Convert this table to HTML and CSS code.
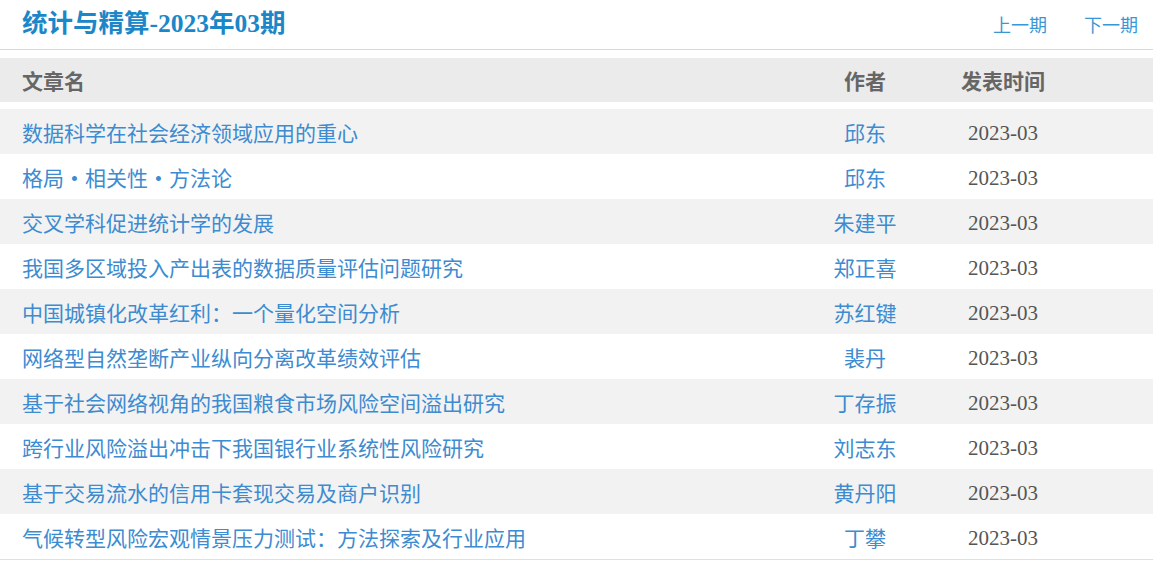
FILE: index.html
```html
<!DOCTYPE html>
<html lang="zh-CN">
<head>
<meta charset="utf-8">
<title>统计与精算-2023年03期</title>
<link rel="stylesheet" href="styles.css">
</head>
<body>
<div class="page">
  <header class="topbar">
    <h1 class="title">统计与精算-2023年03期</h1>
    <nav class="pager">
      <a href="#">上一期</a>
      <a href="#">下一期</a>
    </nav>
  </header>
  <div class="list">
    <div class="row head">
      <div class="c-name">文章名</div>
      <div class="c-author">作者</div>
      <div class="c-date">发表时间</div>
    </div>
    <div class="rows">
      <div class="row"><a class="c-name" href="#">数据科学在社会经济领域应用的重心</a><a class="c-author" href="#">邱东</a><div class="c-date num">2023-03</div></div>
      <div class="row"><a class="c-name" href="#">格局<span class="dot">•</span>相关性<span class="dot">•</span>方法论</a><a class="c-author" href="#">邱东</a><div class="c-date num">2023-03</div></div>
      <div class="row"><a class="c-name" href="#">交叉学科促进统计学的发展</a><a class="c-author" href="#">朱建平</a><div class="c-date num">2023-03</div></div>
      <div class="row"><a class="c-name" href="#">我国多区域投入产出表的数据质量评估问题研究</a><a class="c-author" href="#">郑正喜</a><div class="c-date num">2023-03</div></div>
      <div class="row"><a class="c-name" href="#">中国城镇化改革红利：一个量化空间分析</a><a class="c-author" href="#">苏红键</a><div class="c-date num">2023-03</div></div>
      <div class="row"><a class="c-name" href="#">网络型自然垄断产业纵向分离改革绩效评估</a><a class="c-author" href="#">裴丹</a><div class="c-date num">2023-03</div></div>
      <div class="row"><a class="c-name" href="#">基于社会网络视角的我国粮食市场风险空间溢出研究</a><a class="c-author" href="#">丁存振</a><div class="c-date num">2023-03</div></div>
      <div class="row"><a class="c-name" href="#">跨行业风险溢出冲击下我国银行业系统性风险研究</a><a class="c-author" href="#">刘志东</a><div class="c-date num">2023-03</div></div>
      <div class="row"><a class="c-name" href="#">基于交易流水的信用卡套现交易及商户识别</a><a class="c-author" href="#">黄丹阳</a><div class="c-date num">2023-03</div></div>
      <div class="row"><a class="c-name" href="#">气候转型风险宏观情景压力测试：方法探索及行业应用</a><a class="c-author" href="#">丁攀</a><div class="c-date num">2023-03</div></div>
    </div>
  </div>
</div>
</body>
</html>
```
FILE: styles.css
```css
* { box-sizing: border-box; }
html, body { margin: 0; padding: 0; background: #fff; }
body {
  font-family: "Liberation Serif", "Noto Sans CJK SC", serif;
  color: #555;
}
.page {
  width: 1153px;
}
a { text-decoration: none; }
.topbar {
  height: 50px;
  border-bottom: 1px solid #d8d8d8;
  display: flex;
  align-items: center;
  justify-content: space-between;
  padding: 0 15px 2px 22px;
}
.title {
  margin: 0;
  font-size: 25.5px;
  font-weight: bold;
  color: #1b87c8;
  line-height: 1;
}
.pager {
  display: flex;
  gap: 37px;
}
.pager a {
  font-size: 18px;
  color: #3a97d6;
}
.list {
  padding-top: 8px;
  border-bottom: 1px solid #e0e0e0;
}
.row {
  display: grid;
  grid-template-columns: 1fr 140px 136px;
  padding: 0 82px 0 22px;
  height: 45px;
  align-items: center;
  font-size: 21px;
}
.row.head {
  height: 44px;
  background: #ebebeb;
  color: #666;
  font-weight: bold;
  margin-bottom: 7px;
}
.rows .row:nth-child(odd) { background: #f2f2f2; }
.c-name { color: #3d8bd0; }
.dot {
  display: inline-block;
  width: 1em;
  text-align: center;
}
.head .c-name, .head .c-author, .head .c-date { color: #666; }
.c-author { text-align: center; color: #3d8bd0; }
.c-date { text-align: center; color: #555; }
.num { padding-top: 3px; }
```
